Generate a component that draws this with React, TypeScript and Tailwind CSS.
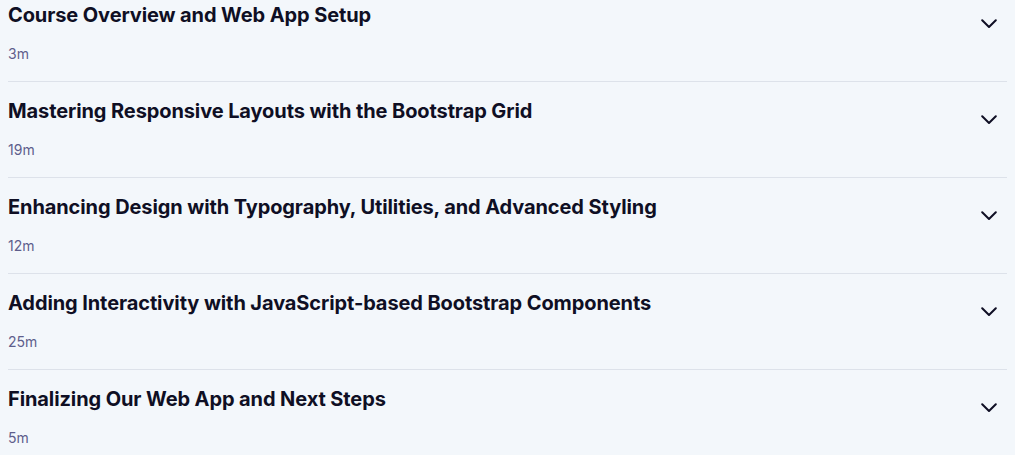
import React from "react";

type Module = { title: string; duration: string };

const modules: Module[] = [
  { title: "Course Overview and Web App Setup", duration: "3m" },
  { title: "Mastering Responsive Layouts with the Bootstrap Grid", duration: "19m" },
  { title: "Enhancing Design with Typography, Utilities, and Advanced Styling", duration: "12m" },
  { title: "Adding Interactivity with JavaScript-based Bootstrap Components", duration: "25m" },
  { title: "Finalizing Our Web App and Next Steps", duration: "5m" },
];

function Chevron() {
  return (
    <svg width="16" height="10" viewBox="0 0 16 10" fill="none" className="shrink-0">
      <polyline
        points="1.2,1.2 8,8 14.8,1.2"
        stroke="#0f0f24"
        strokeWidth="2"
        strokeLinecap="round"
        strokeLinejoin="round"
      />
    </svg>
  );
}

export default function App() {
  return (
    <div
      className="min-h-[455px] w-[1015px] overflow-hidden bg-[#f3f7fb] px-2"
      style={{ fontFamily: "Inter, 'Noto Sans', sans-serif" }}
    >
      <ul className="-mt-[14px]">
        {modules.map((m, i) => (
          <li
            key={m.title}
            className={`flex items-start justify-between pt-[15px] pb-[17px] ${
              i < modules.length - 1 ? "border-b border-[#dde2ea]" : ""
            }`}
          >
            <div className="flex flex-col">
              <h3 className="text-[20px] font-bold leading-7 tracking-[-0.1px] text-[#0f0f24]">
                {m.title}
              </h3>
              <span className="mt-[15px] text-[14px] leading-5 text-[#5e5e8c]">
                {m.duration}
              </span>
            </div>
            <div className="mr-[10px] mt-[18px]">
              <Chevron />
            </div>
          </li>
        ))}
      </ul>
    </div>
  );
}
